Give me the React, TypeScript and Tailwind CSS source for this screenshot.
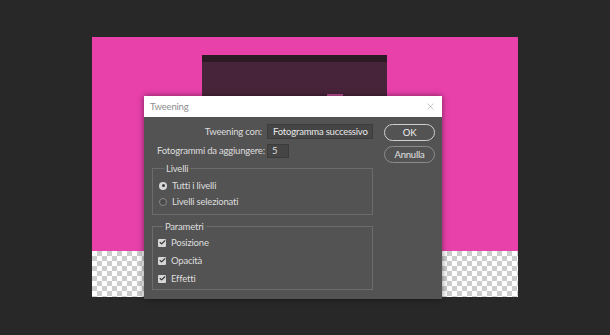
import { ChevronDown, X, Check } from 'lucide-react';

function Radio({ checked, label }: { checked?: boolean; label: string }) {
    return (
        <div className="flex items-center gap-[5px] h-[16px]">
            {checked ? (
                <span className="w-[8px] h-[8px] rounded-full bg-[#d6d6d6] flex items-center justify-center">
                    <span className="w-[3px] h-[3px] rounded-full bg-[#3a3a3a]" />
                </span>
            ) : (
                <span className="w-[8px] h-[8px] rounded-full border border-[#8a8a8a] bg-[#4a4a4a]" />
            )}
            <span>{label}</span>
        </div>
    );
}

function CheckRow({ label }: { label: string }) {
    return (
        <div className="flex items-center gap-[5px] h-[18px]">
            <span className="w-[8px] h-[8px] rounded-[1px] bg-[#d6d6d6] flex items-center justify-center">
                <Check className="w-[7px] h-[7px] text-[#333]" strokeWidth={4} />
            </span>
            <span>{label}</span>
        </div>
    );
}

export default function App() {
    return (
        <div
            className="relative w-[610px] h-[335px] bg-[#282828] overflow-hidden text-[#dedede]"
            style={{ fontFamily: 'Lato, "Open Sans", sans-serif' }}
        >
            {/* canvas */}
            <div className="ml-[92px] pt-[37px] w-[426px]">
                <div className="h-[214px] bg-[#e841aa] pt-[18px] pl-[110px]">
                    <div className="w-[185px] h-[80px] bg-[#48243a]">
                        <div className="h-[7px] bg-[#2c1a24]" />
                        <div className="ml-[125px] mt-[32px] w-[16px] h-[6px] bg-[#c04c96]" />
                    </div>
                </div>
                <div className="h-[46px] bg-[length:10px_10px] bg-[#ffffff] bg-[image:repeating-conic-gradient(#cdcdcd_0_25%,#ffffff_0_50%)]" />
            </div>

            {/* dialog */}
            <div className="absolute left-[144px] top-[96px] w-[298px] h-[203px] bg-[#535353] shadow-[0_0_6px_rgba(0,0,0,0.5)] text-[9.5px] tracking-[-0.2px] leading-none whitespace-nowrap">
                <div className="h-[21px] bg-white flex items-center justify-between pl-[6px] pr-[6px]">
                    <span className="text-[#8e8e8e] text-[9.5px]">Tweening</span>
                    <X className="w-[11px] h-[11px] text-[#9a9a9a]" strokeWidth={1.2} />
                </div>
                <div className="flex pl-[8px] pr-[7px] pt-[7px]">
                    <div className="w-[221px]">
                        <div className="grid grid-cols-[110px_106px] gap-x-[5px] gap-y-[5px] items-center">
                            <span className="text-right">Tweening con:</span>
                            <div className="h-[15px] bg-[#454545] border border-[#3c3c3c] flex items-center justify-between pl-[5px] pr-[3px]">
                                <span className="text-[#e8e8e8]">Fotogramma successivo</span>
                                <ChevronDown className="w-[7px] h-[7px] text-[#bbb]" strokeWidth={2} />
                            </div>
                            <span className="pl-[5px]">Fotogrammi da aggiungere:</span>
                            <div className="w-[22px] h-[14px] bg-[#454545] border border-[#3c3c3c] flex items-center pl-[4px]">5</div>
                        </div>
                        <fieldset className="mt-[6px] h-[51px] border border-[#6c6c6c] px-[6px] pt-[4px]">
                            <legend className="ml-[5px] px-[2px]">Livelli</legend>
                            <Radio checked label="Tutti i livelli" />
                            <Radio label="Livelli selezionati" />
                        </fieldset>
                        <fieldset className="mt-[7px] h-[68px] border border-[#6c6c6c] px-[5px] pt-[2px]">
                            <legend className="ml-[5px] px-[2px]">Parametri</legend>
                            <CheckRow label="Posizione" />
                            <CheckRow label="Opacità" />
                            <CheckRow label="Effetti" />
                        </fieldset>
                    </div>
                    <div className="ml-auto flex flex-col gap-[5px] w-[51px]">
                        <button className="h-[17px] rounded-full border border-[#cfcfcf] text-[#f0f0f0]">OK</button>
                        <button className="h-[17px] rounded-full border border-[#8c8c8c] text-[#e0e0e0]">Annulla</button>
                    </div>
                </div>
            </div>
        </div>
    );
}
